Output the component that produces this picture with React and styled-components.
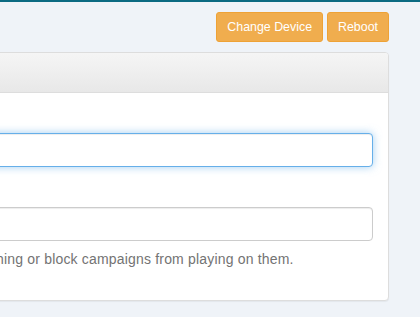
import styled, { createGlobalStyle } from "styled-components";

const GlobalStyle = createGlobalStyle`
  html, body {
    margin: 0;
    padding: 0;
    background: #eff3f8;
    overflow: hidden;
  }
  body {
    font-family: "Liberation Sans", Arial, Helvetica, sans-serif;
    font-size: 14px;
    line-height: 1.42857;
    color: #333;
  }
  * { box-sizing: border-box; }
`;

const TopBar = styled.div`
  height: 2px;
  background: #0b6a82;
`;

const Page = styled.div`
  display: flex;
  justify-content: flex-end;
  padding: 10px 31px 20px 0;
`;

const Column = styled.div`
  flex: 0 0 638px;
  width: 638px;
  display: flex;
  flex-direction: column;
  gap: 10px;
`;

const Toolbar = styled.div`
  display: flex;
  justify-content: flex-end;
  gap: 4px;
`;

const Button = styled.button`
  font-family: inherit;
  font-size: 12.4px;
  line-height: 18px;
  padding: 5px 10px;
  height: 30px;
  color: #fff;
  background: #f0ad4e;
  border: 1px solid #eea236;
  border-radius: 3px;
  cursor: pointer;
`;

const Panel = styled.div`
  background: #fff;
  border: 1px solid #ddd;
  border-radius: 4px;
  box-shadow: 0 1px 1px rgba(0, 0, 0, 0.05);
`;

const PanelHeading = styled.div`
  height: 40px;
  padding: 10px 15px;
  border-bottom: 1px solid #ddd;
  border-radius: 3px 3px 0 0;
  background: linear-gradient(to bottom, #f5f5f5 0%, #e8e8e8 100%);
  color: #333;
`;

const PanelBody = styled.div`
  padding: 15px 15px 20px;
`;

const FormGroup = styled.div`
  margin-bottom: ${(p) => (p.$last ? "0" : "15px")};
`;

const Label = styled.label`
  display: block;
  font-weight: bold;
  margin-bottom: 5px;
  height: 20px;
`;

const Input = styled.input`
  display: block;
  width: 100%;
  height: 34px;
  padding: 6px 12px;
  font-family: inherit;
  font-size: 14px;
  color: #555;
  background: #fff;
  border: 1px solid ${(p) => (p.$focused ? "#66afe9" : "#ccc")};
  border-radius: 4px;
  outline: none;
  box-shadow: ${(p) =>
    p.$focused
      ? "inset 0 1px 1px rgba(0,0,0,.075), 0 0 8px rgba(102,175,233,.6)"
      : "inset 0 1px 1px rgba(0,0,0,.075)"};
`;

const Help = styled.p`
  margin: 9px 0 10px;
  color: #737373;
  letter-spacing: 0.18px;
  white-space: nowrap;
`;

export default function App() {
  return (
    <>
      <GlobalStyle />
      <TopBar />
      <Page>
        <Column>
          <Toolbar>
            <Button>Change Device</Button>
            <Button>Reboot</Button>
          </Toolbar>
          <Panel>
            <PanelHeading>Device</PanelHeading>
            <PanelBody>
              <FormGroup>
                <Label>Name</Label>
                <Input $focused defaultValue="" />
              </FormGroup>
              <FormGroup $last>
                <Label>Tags</Label>
                <Input defaultValue="" />
                <Help>
                  Use tags to group devices for publishing or block campaigns from playing on them.
                </Help>
              </FormGroup>
            </PanelBody>
          </Panel>
        </Column>
      </Page>
    </>
  );
}
